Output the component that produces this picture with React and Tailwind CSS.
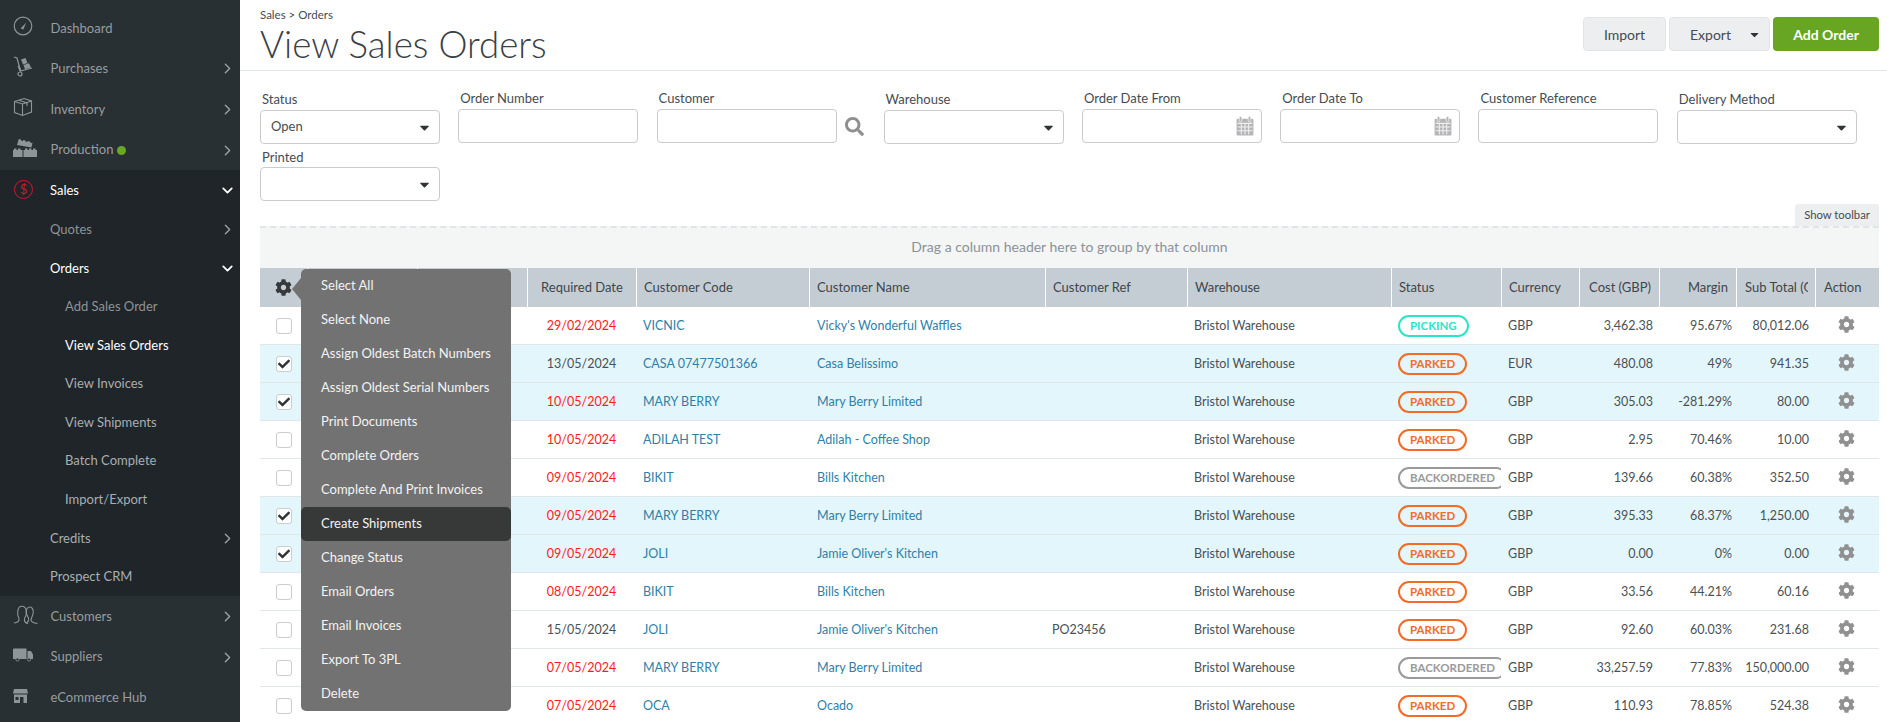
import { ChevronRight, ChevronDown } from 'lucide-react';
import { FaCog, FaSearch, FaCheck, FaCaretDown } from 'react-icons/fa';

const font = { fontFamily: 'Lato, "Open Sans", sans-serif' };

function GaugeIcon() {
  return (
    <svg width="20" height="20" viewBox="0 0 20 20" fill="none" stroke="#8e9598" strokeWidth="1.2">
      <circle cx="10" cy="10" r="8.8" />
      <path d="M7.6 12.6 13.2 6.6 10.4 13.4Z" fill="#8e9598" stroke="none" />
    </svg>
  );
}

function TruckHandIcon() {
  return (
    <svg width="21" height="21" viewBox="0 0 21 21" fill="none" stroke="#8e9598" strokeWidth="1.2">
      <path d="M1 1 4 2 7.5 15 19 12" />
      <path d="M5.5 10 7.5 15" strokeWidth="2" />
      <circle cx="7" cy="18" r="2" />
      <path d="M8 3.5 12.5 2 14.5 7 10 8.5ZM10.5 9 16 7.2 18 11.5 12 13.2Z" fill="#8e9598" stroke="none" />
    </svg>
  );
}

function BoxIcon() {
  return (
    <svg width="20" height="20" viewBox="0 0 20 20" fill="none" stroke="#8e9598" strokeWidth="1.1">
      <path d="M1.5 4.5 11 1.5 18.5 4 18.5 15 9.5 18.5 1.5 15.5Z" />
      <path d="M1.5 4.5 9.5 7 18.5 4M9.5 7V18.5M6 3.2 14 6V9" />
    </svg>
  );
}

function BricksIcon() {
  return (
    <svg width="24" height="20" viewBox="0 0 24 20" fill="#8e9598">
      <path d="M5 3.5 5.8 1 8 1.6 8 2.6 10 3 10.2 2 12.4 2.6 12.4 3.4 14.5 4 14.8 3 17 3.6 17.2 4.6 19.5 5.2 18.4 9.4 4 7Z" />
      <path d="M0 19V12H1V10.5H3.5V12H5V10.5H7.5V12H9.5V19Z" />
      <path d="M10.5 19V12H12V10.5H14.5V12H16V10.5H18.5V12H20V10.5H22.5V12H24V19Z" />
    </svg>
  );
}

function PeopleIcon() {
  return (
    <svg width="25" height="20" viewBox="0 0 25 20" fill="none" stroke="#8e9598" strokeWidth="1.1">
      <path d="M1 18C4 17.5 6.5 16.5 6 13.5 3.8 9 4 1.2 9 1.2 14 1.2 14.5 9 11.5 13.5 11 16.5 12.5 18 15 18.5" />
      <path d="M14 3.5C18-.2 21 4 20 9 19.5 11.5 18 13 18 15 18 17 21 18 24.5 18.5" />
      <path d="M14 3.5C12.5 7 14.2 11 15.5 13 16 15.5 15.2 17 13.5 18" />
    </svg>
  );
}

function VanIcon() {
  return (
    <svg width="20" height="14" viewBox="0 0 20 14" fill="#8e9598">
      <path d="M0 1.5Q0 .5 1 .5H13.5V11H0Z" />
      <path d="M14.5 3H18L20 6.5V11H14.5Z" />
      <circle cx="4.5" cy="11.5" r="1.6" fill="#293033" stroke="#8e9598" strokeWidth=".8" />
      <circle cx="16" cy="11.5" r="1.6" fill="#293033" stroke="#8e9598" strokeWidth=".8" />
    </svg>
  );
}

function StoreIcon() {
  return (
    <svg width="15" height="14" viewBox="0 0 15 14" fill="#8e9598">
      <path d="M1 0H14L15 4.5H0Z" />
      <path d="M1 5.5H14V14H10.5V8H7V14H1ZM2.5 8V11H5.5V8Z" fillRule="evenodd" />
    </svg>
  );
}

function CalendarIcon() {
  return (
    <svg width="18" height="20" viewBox="0 0 17 19" fill="none">
      <rect x=".5" y="2.5" width="16" height="16" rx="1" fill="#b5b5b5" />
      <rect x="3" y=".5" width="2.5" height="5" rx="1.2" fill="#b5b5b5" stroke="#fff" strokeWidth=".6" />
      <rect x="11.5" y=".5" width="2.5" height="5" rx="1.2" fill="#b5b5b5" stroke="#fff" strokeWidth=".6" />
      <path d="M1.5 7H15.5M1.5 10.5H15.5M1.5 14H15.5M5 7V17.5M8.5 7V17.5M12 7V17.5" stroke="#eef0f4" strokeWidth="1" />
    </svg>
  );
}

const topA = [
  { label: 'Dashboard', icon: <GaugeIcon />, arrow: false },
  { label: 'Purchases', icon: <TruckHandIcon />, arrow: true },
  { label: 'Inventory', icon: <BoxIcon />, arrow: true },
  { label: 'Production', icon: <BricksIcon />, arrow: true, dot: true },
];

const topB = [
  { label: 'Customers', icon: <PeopleIcon />, arrow: true },
  { label: 'Suppliers', icon: <VanIcon />, arrow: true },
  { label: 'eCommerce Hub', icon: <StoreIcon />, arrow: false },
];

const subItems = [
  { label: 'Quotes', arrow: true, muted: true },
  { label: 'Orders', open: true, active: true },
  { label: 'Add Sales Order', deep: true, muted: true },
  { label: 'View Sales Orders', deep: true, active: true },
  { label: 'View Invoices', deep: true },
  { label: 'View Shipments', deep: true },
  { label: 'Batch Complete', deep: true },
  { label: 'Import/Export', deep: true },
  { label: 'Credits', arrow: true },
  { label: 'Prospect CRM' },
];

function TopItem({ item }) {
  return (
    <div className="flex h-[40.6px] items-center pl-[13px] pr-[4px] text-[13px] text-[#979da0]">
      <span className="flex w-[37.5px] shrink-0 -translate-y-0.5 items-center">{item.icon}</span>
      <span>{item.label}</span>
      {item.dot && <span className="ml-1 h-[9px] w-[9px] rounded-full bg-[#69a824]" />}
      {item.arrow && <ChevronRight className="ml-auto h-[17px] w-[17px] text-[#9aa0a3]" strokeWidth={2} />}
    </div>
  );
}

function SubItem({ item }) {
  const tone = item.active ? 'text-white' : item.muted ? 'text-[#8d9396]' : 'text-[#a9aeb1]';
  return (
    <div className={`flex h-[38.6px] items-center pr-[4px] text-[13px] ${item.deep ? 'pl-[65px]' : 'pl-[50px]'} ${tone}`}>
      <span>{item.label}</span>
      {item.arrow && <ChevronRight className="ml-auto h-[17px] w-[17px] text-[#9aa0a3]" strokeWidth={2} />}
      {item.open && <ChevronDown className="ml-auto h-[17px] w-[17px] text-white" strokeWidth={2.5} />}
    </div>
  );
}

function Sidebar() {
  return (
    <aside className="h-full w-[240px] shrink-0 bg-[#293033] pt-2">
      {topA.map((item) => <TopItem key={item.label} item={item} />)}
      <div className="bg-[#1f2529]">
        <div className="flex h-[40px] items-center pl-[14px] pr-[4px] text-[13px] text-white">
          <span className="mr-[17px] -mt-0.5 flex h-[19px] w-[19px] shrink-0 items-center justify-center rounded-full border-[1.5px] border-[#d3172e] text-[13px] text-[#d3172e]">$</span>
          <span>Sales</span>
          <ChevronDown className="ml-auto h-[17px] w-[17px]" strokeWidth={2.5} />
        </div>
        {subItems.map((item) => <SubItem key={item.label} item={item} />)}
      </div>
      {topB.map((item) => <TopItem key={item.label} item={item} />)}
    </aside>
  );
}

function Field({ label, select, value, calendar, low, search, tight }) {
  return (
    <div className={`flex h-[58px] shrink-0 items-start ${search ? 'w-[227px]' : 'w-[198.3px]'}`}>
      <div className={`w-[180px] ${low ? 'pt-px' : ''}`}>
        <div className={`h-[20px] pl-[2px] text-[13px] text-[#444c52] ${tight ? 'leading-[20px]' : 'leading-[18px]'}`}>{label}</div>
        <div className="flex h-[34px] items-center justify-between rounded-[4px] border border-[#c9cbcc] bg-white pl-[10px] pr-[7px] text-[13px] text-[#444c52]">
          <span>{value}</span>
          {select && <FaCaretDown className="h-[15px] w-[15px] text-[#2f3437]" />}
          {calendar && <CalendarIcon />}
        </div>
      </div>
      {search && <FaSearch className="ml-[8px] mt-[28px] h-[19px] w-[19px] text-[#8f8f8f]" />}
    </div>
  );
}

const columns = 'grid grid-cols-[47px_110px_110px_109px_173px_236px_142px_204px_110px_78px_80px_77px_79px_63px]';

const rows = [
  ['29/02/2024', true, 'VICNIC', "Vicky's Wonderful Waffles", '', 'PICKING', 'GBP', '3,462.38', '95.67%', '80,012.06', false],
  ['13/05/2024', false, 'CASA 07477501366', 'Casa Belissimo', '', 'PARKED', 'EUR', '480.08', '49%', '941.35', true],
  ['10/05/2024', true, 'MARY BERRY', 'Mary Berry Limited', '', 'PARKED', 'GBP', '305.03', '-281.29%', '80.00', true],
  ['10/05/2024', true, 'ADILAH TEST', 'Adilah - Coffee Shop', '', 'PARKED', 'GBP', '2.95', '70.46%', '10.00', false],
  ['09/05/2024', true, 'BIKIT', 'Bills Kitchen', '', 'BACKORDERED', 'GBP', '139.66', '60.38%', '352.50', false],
  ['09/05/2024', true, 'MARY BERRY', 'Mary Berry Limited', '', 'PARKED', 'GBP', '395.33', '68.37%', '1,250.00', true],
  ['09/05/2024', true, 'JOLI', "Jamie Oliver's Kitchen", '', 'PARKED', 'GBP', '0.00', '0%', '0.00', true],
  ['08/05/2024', true, 'BIKIT', 'Bills Kitchen', '', 'PARKED', 'GBP', '33.56', '44.21%', '60.16', false],
  ['15/05/2024', false, 'JOLI', "Jamie Oliver's Kitchen", 'PO23456', 'PARKED', 'GBP', '92.60', '60.03%', '231.68', false],
  ['07/05/2024', true, 'MARY BERRY', 'Mary Berry Limited', '', 'BACKORDERED', 'GBP', '33,257.59', '77.83%', '150,000.00', false],
  ['07/05/2024', true, 'OCA', 'Ocado', '', 'PARKED', 'GBP', '110.93', '78.85%', '524.38', false],
];

const pillTone = {
  PICKING: 'border-[#2be5c9] text-[#2be5c9]',
  PARKED: 'border-[#f26c27] text-[#f26c27]',
  BACKORDERED: 'border-[#9a9a9a] text-[#9a9a9a]',
};

function Head({ children, className = '' }) {
  return (
    <div className={`flex items-center overflow-hidden whitespace-nowrap border-l border-white text-[13px] text-[#3f464a] ${className}`}>
      {children}
    </div>
  );
}

function OrderRow({ row }) {
  const [date, late, code, name, ref, status, currency, cost, margin, total, picked] = row;
  return (
    <div className={`${columns} h-[38px] items-center border-b border-[#e1e6e9] pt-px text-[12.5px] text-[#4a5155] ${picked ? 'bg-[#e3f6fb]' : 'bg-white'}`}>
      <div className="pl-[16px]">
        <span className="flex h-[16px] w-[16px] items-center justify-center rounded-[3px] border border-[#cccccc] bg-white">
          {picked && <FaCheck className="h-[12px] w-[12px] text-[#2f3437]" />}
        </span>
      </div>
      <div />
      <div />
      <div className={`text-center ${late ? 'text-[#ff1a1a]' : ''}`}>{date}</div>
      <div className="pl-[7px] text-[#2f7fa8]">{code}</div>
      <div className="pl-[8px] text-[#2f7fa8]">{name}</div>
      <div className="pl-[7px]">{ref}</div>
      <div className="pl-[7px]">Bristol Warehouse</div>
      <div className="overflow-hidden pl-[7px]">
        <span className={`inline-block h-[22px] rounded-[11px] border-2 px-[10px] text-[11.5px] font-bold leading-[18px] ${pillTone[status]}`}>{status}</span>
      </div>
      <div className="pl-[7px]">{currency}</div>
      <div className="pr-[6px] text-right">{cost}</div>
      <div className="pr-[4px] text-right">{margin}</div>
      <div className="pr-[6px] text-right">{total}</div>
      <div className="flex -translate-y-[2px] justify-center">
        <FaCog className="h-[17px] w-[17px] text-[#909090]" />
      </div>
    </div>
  );
}

const actions = [
  'Select All', 'Select None', 'Assign Oldest Batch Numbers', 'Assign Oldest Serial Numbers',
  'Print Documents', 'Complete Orders', 'Complete And Print Invoices', 'Create Shipments',
  'Change Status', 'Email Orders', 'Email Invoices', 'Export To 3PL', 'Delete',
];

function ActionsMenu() {
  return (
    <div className="absolute left-[41px] top-px z-10 w-[210px] rounded-[5px] bg-[#727272] text-[13px] text-[#f2f2f2]">
      <span className="absolute -left-[9px] top-[9px] h-0 w-0 border-y-[11px] border-r-[9px] border-y-transparent border-r-[#727272]" />
      {actions.map((action) => (
        <div key={action} className={`flex h-[34px] items-center rounded-[5px] pl-[20px] ${action === 'Create Shipments' ? 'bg-[#373838]' : ''}`}>
          {action}
        </div>
      ))}
    </div>
  );
}

export default function App() {
  return (
    <div className="flex h-[722px] overflow-hidden bg-white" style={font}>
      <Sidebar />
      <main className="min-w-0 flex-1">
        <header className="flex h-[71px] items-start justify-between border-b border-[#e1e6e9] pl-5 pr-2">
          <div>
            <div className="pt-[8px] text-[11.5px] leading-[14px] text-[#444c52]">Sales &gt; Orders</div>
            <h1 className="text-[36.7px] font-light leading-[44px] text-[#3a4145]">View Sales Orders</h1>
          </div>
          <div className="flex gap-[3px] pt-[17px] text-[14px]">
            <button className="h-[34px] w-[83px] rounded-[4px] border border-[#e2e5e8] bg-[#eceef0] text-[#444c52]">Import</button>
            <button className="flex h-[34px] w-[101px] items-center rounded-[4px] border border-[#e2e5e8] bg-[#eceef0] pl-[20px] pr-[8px] text-[#444c52]">
              Export
              <FaCaretDown className="ml-auto h-[13px] w-[13px] text-[#2f3437]" />
            </button>
            <button className="h-[34px] w-[106px] rounded-[4px] bg-[#67a522] font-bold text-white">Add Order</button>
          </div>
        </header>

        <section className="flex h-[133px] flex-wrap content-start pl-5 pt-[18px]">
          <Field label="Status" select value="Open" low />
          <Field label="Order Number" />
          <Field label="Customer" search />
          <Field label="Warehouse" select low />
          <Field label="Order Date From" calendar />
          <Field label="Order Date To" calendar />
          <Field label="Customer Reference" />
          <Field label="Delivery Method" select low />
          <Field label="Printed" select tight />
        </section>

        <div className="ml-5 mr-2">
          <div className="flex justify-end">
            <div className="flex h-[22px] w-[84px] items-center justify-center rounded-t-[3px] bg-[#eceef0] text-[11.3px] text-[#444c52]">Show toolbar</div>
          </div>
          <div className="flex h-[42px] items-center justify-center border-t-2 border-dashed border-[#dfe5e9] bg-[#f4f6f6] pb-[3px] text-[14px] text-[#8b9296]">
            Drag a column header here to group by that column
          </div>
          <div className="relative">
            <div className={`${columns} h-[39px] bg-[#c5cdd4]`}>
              <div className="flex items-center pl-[15px]">
                <FaCog className="h-[17px] w-[17px] text-[#35393c]" />
              </div>
              <Head />
              <Head />
              <Head className="justify-center">Required Date</Head>
              <Head className="pl-[7px]">Customer Code</Head>
              <Head className="pl-[7px]">Customer Name</Head>
              <Head className="pl-[7px]">Customer Ref</Head>
              <Head className="pl-[7px]">Warehouse</Head>
              <Head className="pl-[7px]">Status</Head>
              <Head className="pl-[7px]">Currency</Head>
              <Head className="justify-end pr-[8px]">Cost (GBP)</Head>
              <Head className="justify-end pr-[8px]">Margin</Head>
              <Head className="pl-[8px]">
                <span className="block w-[63px] overflow-hidden">Sub Total (GBP)</span>
              </Head>
              <Head className="pl-[8px]">Action</Head>
            </div>
            {rows.map((row, i) => <OrderRow key={i} row={row} />)}
            <ActionsMenu />
          </div>
        </div>
      </main>
    </div>
  );
}
